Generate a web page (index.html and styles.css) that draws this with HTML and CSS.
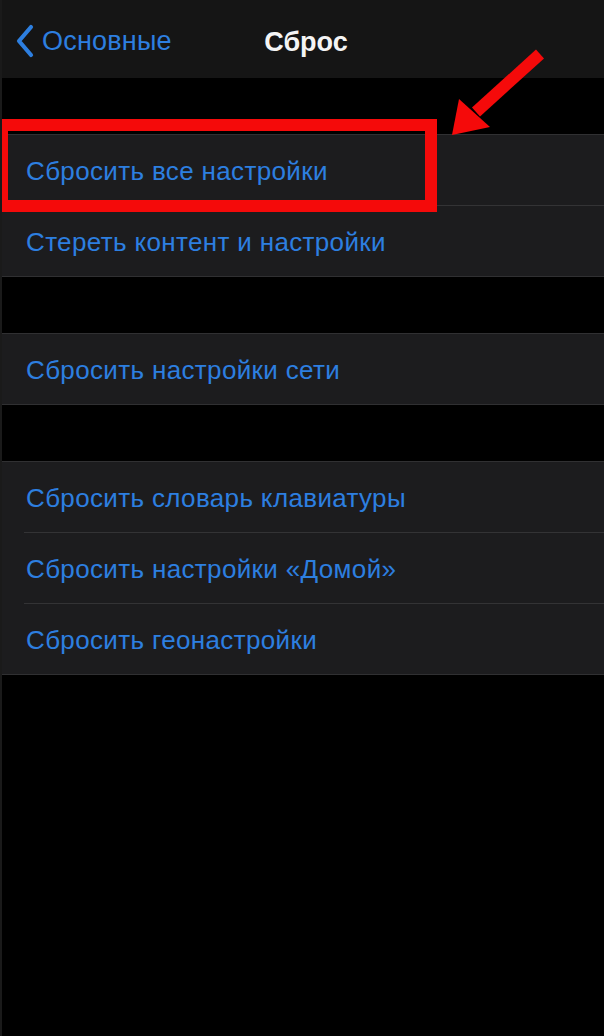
FILE: index.html
```html
<!DOCTYPE html>
<html lang="ru">
<head>
<meta charset="utf-8">
<title>Сброс</title>
<link rel="stylesheet" href="styles.css">
</head>
<body>
<div class="screen">
  <header class="navbar">
    <div class="back">
      <svg class="chev" width="20" height="34" viewBox="0 0 20 34"><path d="M16 3 L4 17 L16 31" fill="none" stroke="#2d7fe0" stroke-width="4.2" stroke-linecap="round" stroke-linejoin="round"/></svg>
      <span class="back-label">Основные</span>
    </div>
    <div class="title">Сброс</div>
  </header>
  <main class="content">
    <section class="group">
      <div class="row">Сбросить все настройки</div>
      <div class="row">Стереть контент и настройки</div>
    </section>
    <section class="group">
      <div class="row">Сбросить настройки сети</div>
    </section>
    <section class="group">
      <div class="row">Сбросить словарь клавиатуры</div>
      <div class="row">Сбросить настройки «Домой»</div>
      <div class="row">Сбросить геонастройки</div>
    </section>
  </main>
  <div class="highlight"></div>
  <svg class="arrow" width="110" height="100" viewBox="0 0 110 100">
    <line x1="94" y1="8" x2="30" y2="66" stroke="#f50a0a" stroke-width="12"/>
    <polygon points="6,89 13,53 44,81" fill="#f50a0a"/>
  </svg>
</div>
</body>
</html>
```
FILE: styles.css
```css
* { box-sizing: border-box; }
html, body { margin: 0; padding: 0; background: #000; }
.screen {
  position: relative;
  width: 604px;
  height: 1036px;
  overflow: hidden;
  background: #000;
  border-left: 2px solid #1a1a1a;
  font-family: "Liberation Sans", Arial, sans-serif;
}
.navbar {
  position: relative;
  height: 78px;
  background: #151515;
  display: flex;
  align-items: center;
}
.back {
  display: flex;
  align-items: center;
  gap: 7px;
  padding-left: 13px;
  padding-top: 4px;
}
.back-label {
  color: #2d7fe0;
  font-size: 27px;
  letter-spacing: 0.2px;
}
.title {
  position: absolute;
  left: 0;
  right: 0;
  top: 27px;
  text-align: center;
  color: #f4f4f4;
  font-size: 27px;
  font-weight: bold;
  padding-left: 6px;
}
.content {
  display: flex;
  flex-direction: column;
  gap: 56px;
  padding-top: 56px;
}
.group {
  background: #1c1c1e;
  border-top: 1px solid #303032;
  border-bottom: 1px solid #303032;
}
.row {
  height: 70px;
  display: flex;
  align-items: center;
  padding-left: 24px;
  padding-top: 2px;
  color: #2d7fe0;
  font-size: 26px;
  letter-spacing: 0.35px;
  position: relative;
}
.row + .row::before {
  content: "";
  position: absolute;
  top: -1px;
  left: 22px;
  right: 0;
  height: 1px;
  background: #333335;
}
.row + .row { margin-top: 1px; }
.highlight {
  position: absolute;
  left: -6px;
  top: 119px;
  width: 441px;
  height: 93px;
  border: 12px solid #f50a0a;
}
.arrow {
  position: absolute;
  left: 444px;
  top: 46px;
}
```
